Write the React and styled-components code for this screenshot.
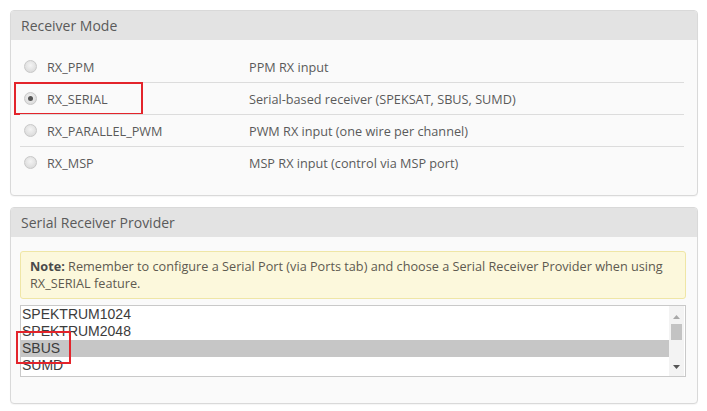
import React from "react";
import styled, { createGlobalStyle } from "styled-components";

const Global = createGlobalStyle`
  html, body { margin: 0; padding: 0; background: #ffffff; }
  body { font-family: "Open Sans", "Liberation Sans", sans-serif; }
`;

const Page = styled.div`
  width: 707px;
  height: 411px;
  box-sizing: border-box;
  padding: 10px 9px 0 10px;
  display: flex;
  flex-direction: column;
  gap: 11px;
`;

const Panel = styled.section`
  height: ${(p) => p.$h}px;
  box-sizing: border-box;
  border: 1px solid #d9d9d9;
  border-radius: 4px;
  background: #fafafa;
  overflow: hidden;
  box-shadow: 0 1px 1px rgba(0,0,0,0.04);
`;

const Header = styled.div`
  height: 29px;
  background: #e3e3e3;
  display: flex;
  align-items: center;
  padding-left: 10px;
  font-size: 14px;
  color: #5a5a5a;
`;

const Body = styled.div`
  padding: ${(p) => p.$pad};
`;

const Row = styled.div`
  position: relative;
  height: 32px;
  display: flex;
  align-items: center;
  border-top: 1px solid ${(p) => (p.$first ? "transparent" : "#dcdcdc")};
  box-sizing: border-box;
  font-size: 12.7px;
  color: #5a5a5a;
`;

const Radio = styled.span`
  width: 11px;
  height: 11px;
  border-radius: 50%;
  margin: 0 10px 0 4px;
  flex: none;
  background: radial-gradient(circle at 50% 40%, #f4f4f4 0%, #dedede 70%, #cfcfcf 100%);
  border: 1px solid #c8c8c8;
  display: flex;
  align-items: center;
  justify-content: center;
  &::after {
    content: "";
    width: 5px;
    height: 5px;
    border-radius: 50%;
    background: ${(p) => (p.$checked ? "#555" : "transparent")};
  }
`;

const Label = styled.span`
  width: 202px;
  flex: none;
`;

const Desc = styled.span``;

const RedBox = styled.div`
  position: absolute;
  left: ${(p) => p.$l}px;
  top: ${(p) => p.$t}px;
  width: ${(p) => p.$w}px;
  height: ${(p) => p.$hh}px;
  border: 2px solid #e3242b;
  box-sizing: border-box;
  pointer-events: none;
`;

const Note = styled.div`
  background: #fcf8dc;
  border: 1px solid #efe6a6;
  border-radius: 3px;
  padding: 6px 9px 6px 9px;
  font-size: 12.7px;
  line-height: 17px;
  color: #5e5a50;
  margin-bottom: 6px;
  b { font-weight: 700; color: #4a4a4a; }
`;

const ListBox = styled.div`
  position: relative;
  height: 72px;
  box-sizing: border-box;
  border: 1px solid #c9c9c9;
  background: #fff;
  display: flex;
`;

const Items = styled.div`
  flex: 1;
  height: 70px;
  overflow: hidden;
`;

const Item = styled.div`
  height: 17px;
  line-height: 17px;
  padding-left: 1px;
  font-family: "Liberation Sans", Arial, sans-serif;
  font-size: 14px;
  color: #3c3c3c;
  background: ${(p) => (p.$sel ? "#c6c6c6" : "transparent")};
`;

const Scroll = styled.div`
  width: 15px;
  flex: none;
  background: #f3f3f3;
  position: relative;
  margin-right: 1px;
`;

const Thumb = styled.div`
  position: absolute;
  left: 2px;
  right: 2px;
  top: 18px;
  height: 16px;
  background: #c3c3c3;
`;

const Arrow = styled.svg`
  position: absolute;
  left: 4px;
  ${(p) => (p.$up ? "top: 9px;" : "bottom: 7px;")}
`;

export default function App() {
  const modes = [
    ["RX_PPM", "PPM RX input"],
    ["RX_SERIAL", "Serial-based receiver (SPEKSAT, SBUS, SUMD)"],
    ["RX_PARALLEL_PWM", "PWM RX input (one wire per channel)"],
    ["RX_MSP", "MSP RX input (control via MSP port)"],
  ];
  return (
    <>
      <Global />
      <Page>
        <Panel $h={186}>
          <Header>Receiver Mode</Header>
          <Body $pad="10px 13px 0 9px">
            {modes.map(([l, d], i) => (
              <Row key={l} $first={i === 0}>
                <Radio $checked={i === 1} />
                <Label>{l}</Label>
                <Desc>{d}</Desc>
                {i === 1 && <RedBox $l={-6} $t={-1} $w={129} $hh={33} />}
              </Row>
            ))}
          </Body>
        </Panel>
        <Panel $h={197}>
          <Header>Serial Receiver Provider</Header>
          <Body $pad="14px 11px 0 9px">
            <Note>
              <b>Note:</b> Remember to configure a Serial Port (via Ports tab) and choose a Serial Receiver Provider when using RX_SERIAL feature.
            </Note>
            <ListBox>
              <Items>
                <Item>SPEKTRUM1024</Item>
                <Item>SPEKTRUM2048</Item>
                <Item $sel>SBUS</Item>
                <Item>SUMD</Item>
              </Items>
              <Scroll>
                <Arrow $up width="7" height="4" viewBox="0 0 7 4">
                  <path d="M0 4 L3.5 0 L7 4 Z" fill="#a8a8a8" />
                </Arrow>
                <Thumb />
                <Arrow width="7" height="4" viewBox="0 0 7 4">
                  <path d="M0 0 L3.5 4 L7 0 Z" fill="#555" />
                </Arrow>
              </Scroll>
              <RedBox $l={-5} $t={25} $w={55} $hh={33} />
            </ListBox>
          </Body>
        </Panel>
      </Page>
    </>
  );
}
